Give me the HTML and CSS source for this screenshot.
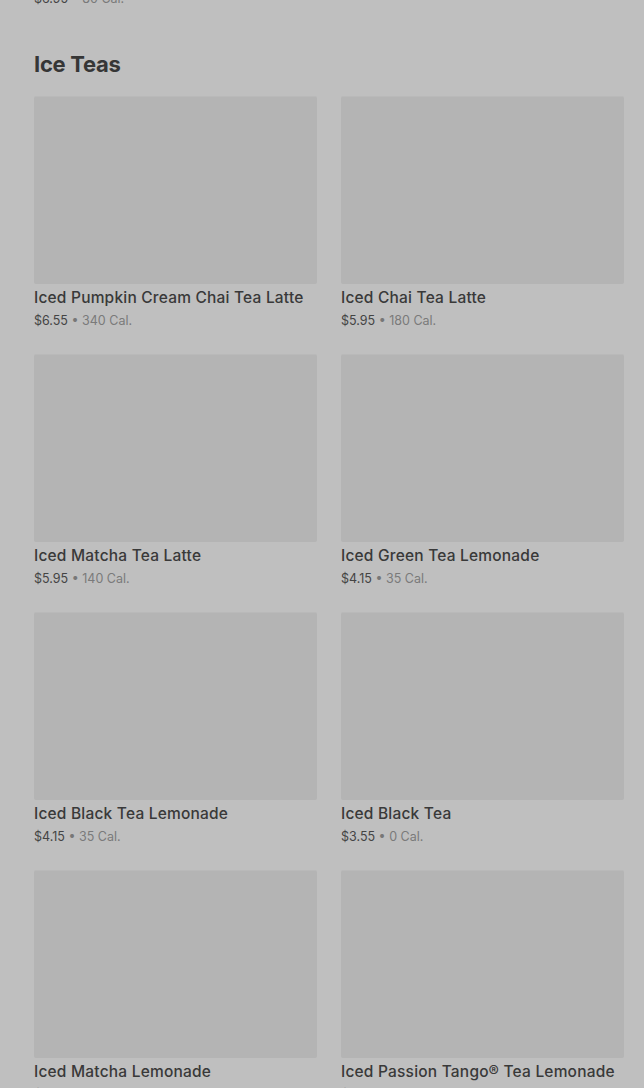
FILE: index.html
```html
<!DOCTYPE html>
<html lang="en">
<head>
  <meta charset="UTF-8" />
  <meta name="viewport" content="width=device-width, initial-scale=1.0"/>
  <title>Menu - Ice Teas</title>
  <link rel="stylesheet" href="styles.css">
</head>
<body>

  <div class="menu">
    <p class="meta prev"><span class="price">$6.95</span> • <span class="cal">80 Cal.</span></p>

    <section class="category">
      <h2>Ice Teas</h2>

      <div class="grid">
        <div class="item">
          <div class="thumb"></div>
          <h3>Iced Pumpkin Cream Chai Tea Latte</h3>
          <p class="meta"><span class="price">$6.55</span> • <span class="cal">340 Cal.</span></p>
        </div>
        <div class="item">
          <div class="thumb"></div>
          <h3>Iced Chai Tea Latte</h3>
          <p class="meta"><span class="price">$5.95</span> • <span class="cal">180 Cal.</span></p>
        </div>
        <div class="item">
          <div class="thumb"></div>
          <h3>Iced Matcha Tea Latte</h3>
          <p class="meta"><span class="price">$5.95</span> • <span class="cal">140 Cal.</span></p>
        </div>
        <div class="item">
          <div class="thumb"></div>
          <h3>Iced Green Tea Lemonade</h3>
          <p class="meta"><span class="price">$4.15</span> • <span class="cal">35 Cal.</span></p>
        </div>
        <div class="item">
          <div class="thumb"></div>
          <h3>Iced Black Tea Lemonade</h3>
          <p class="meta"><span class="price">$4.15</span> • <span class="cal">35 Cal.</span></p>
        </div>
        <div class="item">
          <div class="thumb"></div>
          <h3>Iced Black Tea</h3>
          <p class="meta"><span class="price">$3.55</span> • <span class="cal">0 Cal.</span></p>
        </div>
        <div class="item">
          <div class="thumb"></div>
          <h3>Iced Matcha Lemonade</h3>
          <p class="meta"><span class="price">$5.95</span> • <span class="cal">100 Cal.</span></p>
        </div>
        <div class="item">
          <div class="thumb"></div>
          <h3>Iced Passion Tango® Tea Lemonade</h3>
          <p class="meta"><span class="price">$4.15</span> • <span class="cal">50 Cal.</span></p>
        </div>
      </div>
    </section>
  </div>

</body>
</html>
```

FILE: styles.css
```css
body {
  margin: 0;
  background: #bfbfbf;
  color: #333;
  font-family: Inter, 'Noto Sans', sans-serif;
  overflow: hidden;
}

.menu {
  padding: 0 20px 0 34px;
  margin-top: -12px;
}

.prev {
  margin: 0;
}

.category h2 {
  font-size: 22px;
  font-weight: 700;
  color: #363636;
  letter-spacing: -0.3px;
  margin: 40px 0 17px;
  line-height: 30px;
}

.grid {
  display: grid;
  grid-template-columns: 1fr 1fr;
  column-gap: 24px;
  row-gap: 23px;
}

.thumb {
  height: 187px;
  background: #b4b4b4;
  border-top: 1px solid #b9b9b9;
  border-radius: 2px;
}

.item h3 {
  font-size: 15.5px;
  font-weight: 500;
  color: #393939;
  margin: 2px 0 0;
  line-height: 24px;
  letter-spacing: 0.2px;
  white-space: nowrap;
}

.meta {
  font-size: 12.5px;
  margin: 1px 0 0;
  line-height: 20px;
  color: #777;
}

.meta .price {
  color: #444;
}

.meta .cal {
  color: #7a7a7a;
}
```
